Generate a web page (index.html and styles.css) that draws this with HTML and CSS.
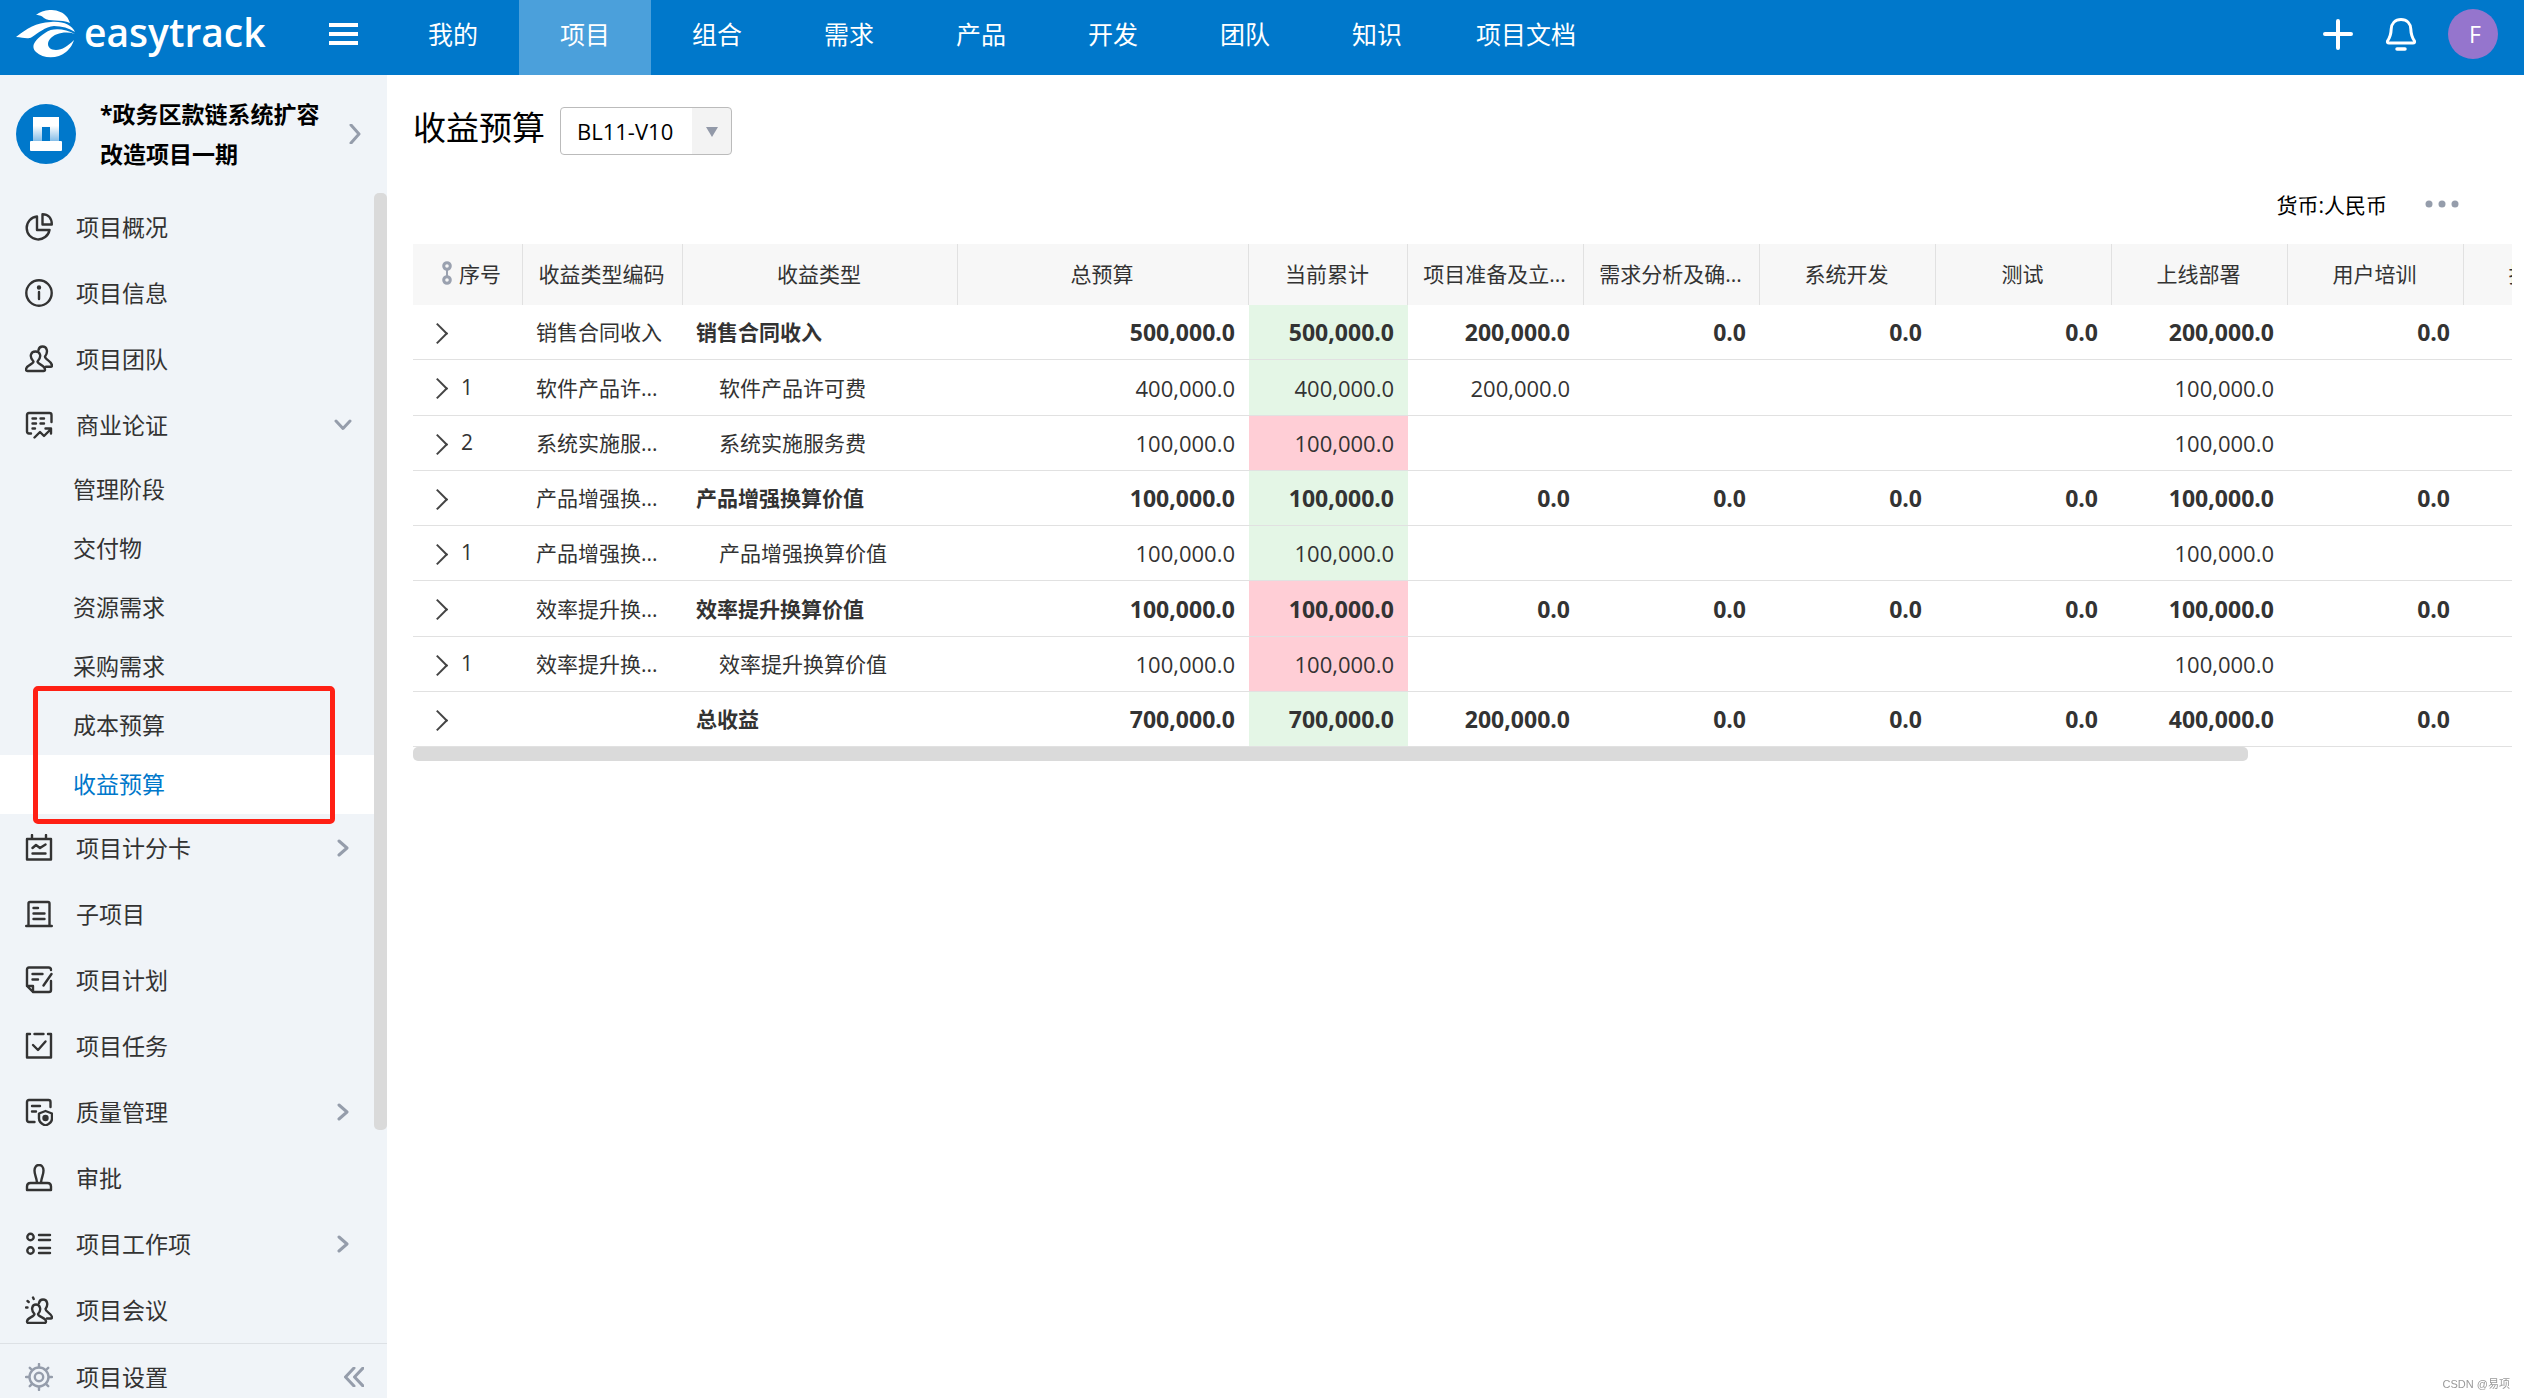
FILE: index.html
```html
<!DOCTYPE html>
<html lang="zh-CN">
<head>
<meta charset="utf-8">
<title>收益预算</title>
<link rel="stylesheet" href="styles.css">
</head>
<body>
<header class="topbar">
  <div class="brand">
    <a class="logo" href="#">
      <svg width="60" height="48" viewBox="0 0 60 48" fill="#fff" aria-hidden="true">
        <path d="M20 5 C28 -2 44 -2 51 7 C53 10 54 13 54 13 C45 9 33 12 28 8 C25 5 22 5 20 5 Z"/>
        <path d="M0 27 C12 18 19 13 35 12 C47 11 56 15 59 22 C53 18 46 16 38 16 C29 17 22 23 16 27 C11 30 7 27 0 27 Z"/>
        <path d="M59 24 C49 19 37 17 29 23 C19 30 14 36 20 42 C27 49 42 49 50 42 C55 38 57 33 58 30 C52 36 46 40 40 40 C32 40 30 34 34 29 C39 23 50 21 59 24 Z"/>
      </svg>
      <span class="logo-text">easytrack</span>
    </a>
    <button class="icon-btn" type="button" aria-label="菜单">
      <svg width="30" height="24" viewBox="0 0 30 24" stroke="#fff" stroke-width="4"><path d="M0 3H29M0 12H29M0 21H29"/></svg>
    </button>
  </div>
  <nav class="topnav">
    <a href="#">我的</a>
    <a href="#" class="current">项目</a>
    <a href="#">组合</a>
    <a href="#">需求</a>
    <a href="#">产品</a>
    <a href="#">开发</a>
    <a href="#">团队</a>
    <a href="#">知识</a>
    <a href="#">项目文档</a>
  </nav>
  <div class="tools">
    <button class="icon-btn" type="button" aria-label="新建">
      <svg width="32" height="34" viewBox="0 0 32 34" stroke="#fff" stroke-width="4" stroke-linecap="round"><path d="M16 4V31M3 17H29"/></svg>
    </button>
    <button class="icon-btn" type="button" aria-label="通知">
      <svg width="32" height="34" viewBox="0 0 32 34" fill="none" stroke="#fff" stroke-width="3" stroke-linecap="round" stroke-linejoin="round"><path d="M16 2.500C10 2.500 6.500 6.500 6.200 12C6 18 5 20.500 2.500 24Q2 26 4 26H28Q30 26 29.500 24C27 20.500 26 18 25.800 12C25.500 6.500 22 2.500 16 2.500Z"/><path d="M12 32H20" stroke-width="3.500"/></svg>
    </button>
    <button class="user" type="button">F</button>
  </div>
</header>

<div class="shell">
  <aside class="sidebar">
    <a class="project" href="#">
      <svg width="60" height="60" viewBox="0 0 60 60" aria-hidden="true">
        <defs><linearGradient id="tower" x1="0" y1="0" x2="0" y2="1"><stop offset="0.350" stop-color="#fff"/><stop offset="1" stop-color="#7db9e6"/></linearGradient></defs>
        <circle cx="30" cy="30" r="30" fill="#0078cb"/>
        <path d="M17 13H43V38H34V23H26V38H17Z" fill="url(#tower)"/>
        <rect x="14" y="37" width="32" height="10" rx="1" fill="#fff"/>
      </svg>
      <span class="project-name">*政务区款链系统扩容<br>改造项目一期</span>
      <svg class="chev" width="12" height="20" viewBox="0 0 12 20"><path d="M2 1L10 10L2 19"/></svg>
    </a>

    <div class="menu-area">
      <nav class="menu">
        <a class="item" href="#"><svg class="ico" viewBox="0 0 28 28"><path d="M12 3.500A11.500 11.500 0 1 0 24.500 17H12Z"/><path d="M17.500 1.200V11.500H26.800C26.800 5 23 1.200 17.500 1.200Z"/></svg><span>项目概况</span></a>
        <a class="item" href="#"><svg class="ico" viewBox="0 0 28 28"><circle cx="14" cy="14" r="12.700"/><path d="M14 13V20"/><circle cx="14" cy="8.500" r="1" fill="currentColor"/></svg><span>项目信息</span></a>
        <a class="item" href="#"><svg class="ico" viewBox="0 0 28 28"><path d="M8.500 16.500C4 12 5.500 6.500 10.500 6.500S17 12 12.500 16.500C12.500 19.500 20 20 20 24.500Q20 26 18.500 26H2.500Q1 26 1 24.500C1 20 8.500 19.500 8.500 16.500Z"/><path d="M13.500 5C14 2.500 16 1.500 17.500 1.500C22 1.500 23.500 7 20 11.500C20 15 27 16 27 20.500Q27 21.800 25.500 21.800H21"/></svg><span>项目团队</span></a>
        <a class="item" href="#"><svg class="ico" viewBox="0 0 28 28"><path d="M6 22.500H4Q2 22.500 2 20.500V4Q2 2 4 2H24.500Q26.500 2 26.500 4V11"/><path d="M7.500 7.500H11M15.500 7.500H19M7.500 12.500H11M15.500 12.500H19M7.500 17.500H10M9.500 26.500L15 21L19 25L26 18M20.500 17.500H26V22.500"/></svg><span>商业论证</span><svg class="chev down" width="18" height="12" viewBox="0 0 18 12"><path d="M2 2L9 9.500L16 2"/></svg></a>
        <div class="submenu">
          <a href="#">管理阶段</a>
          <a href="#">交付物</a>
          <a href="#">资源需求</a>
          <a href="#">采购需求</a>
          <a href="#">成本预算</a>
          <a href="#" class="current">收益预算</a>
          <div class="callout"></div>
        </div>
        <a class="item" href="#"><svg class="ico" viewBox="0 0 28 28"><path d="M2 5H26V25.500H2ZM7 1V5M21 1V5M7.500 19.500H20.500M7.500 14L11 11L15 14L20.500 10.500"/></svg><span>项目计分卡</span><svg class="chev" width="12" height="18" viewBox="0 0 12 18"><path d="M2 2L10 9L2 16"/></svg></a>
        <a class="item" href="#"><svg class="ico" viewBox="0 0 28 28"><path d="M3.500 26V3.500Q3.500 2 5 2H23Q24.500 2 24.500 3.500V26M1.200 26H26.800M8.500 8H13M8.500 13.500H19.500M8.500 19H19.500"/></svg><span>子项目</span></a>
        <a class="item" href="#"><svg class="ico" viewBox="0 0 28 28"><path d="M26 4Q26 1.500 23.500 1.500H4Q2 1.500 2 3.500V20L8 26H24Q26 26 26 24V15M2 20H8V26M7.500 8H17.500M7.500 13.500H13M18.500 19.500L26.500 8"/></svg><span>项目计划</span></a>
        <a class="item" href="#"><svg class="ico" viewBox="0 0 28 28"><path d="M5 2H2V25.500H26V2H23M9.500 2H18.500M8 13L13 18L20.500 9.500"/></svg><span>项目任务</span></a>
        <a class="item" href="#"><svg class="ico" viewBox="0 0 28 28"><path d="M9.500 24H4Q2 24 2 22V4Q2 2 4 2H23.500Q25.500 2 25.500 4V9M7 8H15M7 13.500H11"/><path d="M20.500 13L27 15.500V20.500Q27 25 20.500 27.500Q14 25 14 20.500V15.500Z"/><circle cx="20.500" cy="20" r="2" fill="currentColor"/></svg><span>质量管理</span><svg class="chev" width="12" height="18" viewBox="0 0 12 18"><path d="M2 2L10 9L2 16"/></svg></a>
        <a class="item" href="#"><svg class="ico" viewBox="0 0 28 28"><path d="M12 18.500C11.500 13 9.500 11 9.500 6.500C9.500 3 11.500 1 14 1S18.500 3 18.500 6.500C18.500 11 16.500 13 16 18.500M2 26V22.500Q2 19 5.500 19H22.500Q26 19 26 22.500V26Z"/></svg><span>审批</span></a>
        <a class="item" href="#"><svg class="ico" viewBox="0 0 28 28"><circle cx="5.500" cy="7" r="3.200"/><circle cx="5.500" cy="20.500" r="3.200"/><path d="M14 5H25M14 10H25M14 18H25M14 23H25"/></svg><span>项目工作项</span><svg class="chev" width="12" height="18" viewBox="0 0 12 18"><path d="M2 2L10 9L2 16"/></svg></a>
        <a class="item" href="#"><svg class="ico" viewBox="0 0 28 28"><path d="M9.500 18C5.500 14 7 8.500 11 8.500S17 14 13 18C13 21 21 21.500 21 25.500Q21 27 19.500 27H3.500Q2 27 2 25.500C2 21.500 9.500 21 9.500 18Z"/><path d="M14 7C14.500 4.500 16.500 3.500 18 3.500C22.500 3.500 23.500 9 20.500 13C20.500 16 27 17.500 27 21.500Q27 22.500 25.500 22.500H22"/><path d="M8 1.500L8.700 3M2.500 5L3.700 6M1 11.500H2.500"/></svg><span>项目会议</span></a>
      </nav>
      <div class="track"><div class="thumb"></div></div>
    </div>

    <div class="settings">
      <a class="settings-link" href="#"><svg class="ico muted" viewBox="0 0 28 28"><circle cx="14" cy="14" r="9.500"/><circle cx="14" cy="14" r="4.200"/><path d="M14 1V4M14 24V27M1 14H4M24 14H27M4.800 4.800L7 7M21 21L23.200 23.200M23.200 4.800L21 7M7 21L4.800 23.200"/></svg><span>项目设置</span></a>
      <button class="icon-btn" type="button" aria-label="收起">
        <svg class="chev" width="20" height="20" viewBox="0 0 20 20"><path d="M10 1L1.500 10L10 19M19 1L10.500 10L19 19"/></svg>
      </button>
    </div>
  </aside>

  <main class="content">
    <div class="title-row">
      <h1><label for="version">收益预算</label></h1>
      <div class="picker">
        <select id="version"><option>BL11-V10</option></select>
        <svg class="caret" width="12" height="10" viewBox="0 0 12 10"><path d="M0 0H12L6 10Z" fill="#9299a8"/></svg>
      </div>
    </div>
    <div class="toolbar">
      <span>货币:人民币</span>
      <button class="icon-btn" type="button" aria-label="更多">
        <svg width="34" height="8" viewBox="0 0 34 8" fill="#959dab"><circle cx="4" cy="4" r="3.500"/><circle cx="17" cy="4" r="3.500"/><circle cx="30" cy="4" r="3.500"/></svg>
      </button>
    </div>
    <div class="table-scroll">
      <table class="grid">
        <colgroup><col class="c-no"><col class="c-code"><col class="c-type"><col class="c-total"><col class="c-now"><col class="c-st"><col class="c-st"><col class="c-st"><col class="c-st"><col class="c-st"><col class="c-st"><col class="c-st"></colgroup>
        <thead>
          <tr>
            <th><div class="no-head"><svg width="12" height="24" viewBox="0 0 12 24" fill="none" stroke="#9aa1af" stroke-width="3"><circle cx="6" cy="5" r="3.300"/><circle cx="6" cy="19" r="3.300"/><path d="M6 8V16" stroke-width="2"/></svg><span>序号</span></div></th>
            <th>收益类型编码</th><th>收益类型</th><th>总预算</th><th>当前累计</th><th>项目准备及立...</th><th>需求分析及确...</th><th>系统开发</th><th>测试</th><th>上线部署</th><th>用户培训</th><th>投产验收</th>
          </tr>
        </thead>
        <tbody>
          <tr class="group"><td><button class="exp" type="button" aria-label="展开"></button></td><td>销售合同收入</td><td>销售合同收入</td><td>500,000.0</td><td class="ok">500,000.0</td><td>200,000.0</td><td>0.0</td><td>0.0</td><td>0.0</td><td>200,000.0</td><td>0.0</td><td></td></tr>
          <tr><td><button class="exp" type="button" aria-label="展开"></button>1</td><td>软件产品许...</td><td>软件产品许可费</td><td>400,000.0</td><td class="ok">400,000.0</td><td>200,000.0</td><td></td><td></td><td></td><td>100,000.0</td><td></td><td></td></tr>
          <tr><td><button class="exp" type="button" aria-label="展开"></button>2</td><td>系统实施服...</td><td>系统实施服务费</td><td>100,000.0</td><td class="bad">100,000.0</td><td></td><td></td><td></td><td></td><td>100,000.0</td><td></td><td></td></tr>
          <tr class="group"><td><button class="exp" type="button" aria-label="展开"></button></td><td>产品增强换...</td><td>产品增强换算价值</td><td>100,000.0</td><td class="ok">100,000.0</td><td>0.0</td><td>0.0</td><td>0.0</td><td>0.0</td><td>100,000.0</td><td>0.0</td><td></td></tr>
          <tr><td><button class="exp" type="button" aria-label="展开"></button>1</td><td>产品增强换...</td><td>产品增强换算价值</td><td>100,000.0</td><td class="ok">100,000.0</td><td></td><td></td><td></td><td></td><td>100,000.0</td><td></td><td></td></tr>
          <tr class="group"><td><button class="exp" type="button" aria-label="展开"></button></td><td>效率提升换...</td><td>效率提升换算价值</td><td>100,000.0</td><td class="bad">100,000.0</td><td>0.0</td><td>0.0</td><td>0.0</td><td>0.0</td><td>100,000.0</td><td>0.0</td><td></td></tr>
          <tr><td><button class="exp" type="button" aria-label="展开"></button>1</td><td>效率提升换...</td><td>效率提升换算价值</td><td>100,000.0</td><td class="bad">100,000.0</td><td></td><td></td><td></td><td></td><td>100,000.0</td><td></td><td></td></tr>
          <tr class="group"><td><button class="exp" type="button" aria-label="展开"></button></td><td></td><td>总收益</td><td>700,000.0</td><td class="ok">700,000.0</td><td>200,000.0</td><td>0.0</td><td>0.0</td><td>0.0</td><td>400,000.0</td><td>0.0</td><td></td></tr>
        </tbody>
      </table>
    </div>
    <div class="h-thumb"></div>
  </main>
</div>
<div class="watermark">CSDN @易项</div>
</body>
</html>
```
FILE: styles.css
```css
* { box-sizing: border-box; }

body {
  margin: 0;
  height: 100vh;
  display: flex;
  flex-direction: column;
  overflow: hidden;
  background: #fff;
  color: #333;
  font-family: "Open Sans", "Noto Sans CJK SC", sans-serif;
  font-size: 21px;
  font-weight: 400;
}

a { color: inherit; text-decoration: none; }

button {
  padding: 0;
  border: 0;
  background: none;
  font: inherit;
  color: inherit;
}

.icon-btn { display: flex; }

/* top bar */
.topbar {
  display: flex;
  flex: none;
  height: 75px;
  background: #0078cb;
  color: #fff;
}

.brand {
  width: 387px;
  flex: none;
  display: flex;
  align-items: center;
  justify-content: space-between;
  padding: 0 28px 7px 16px;
}

.logo { display: flex; align-items: center; gap: 8px; }
.logo-text { padding-bottom: 4px; font-size: 39px; font-weight: 600; line-height: 48px; }

.topnav { display: flex; flex: 1; }
.topnav a {
  min-width: 132px;
  padding: 0 33px 10px;
  display: flex;
  align-items: center;
  justify-content: center;
  font-size: 25px;
}
.topnav .current { background: #4ba0db; }

.tools {
  display: flex;
  align-items: center;
  gap: 31px;
  padding: 0 26px 8px 0;
}
.user {
  width: 50px;
  height: 50px;
  padding-left: 4px;
  border-radius: 50%;
  background: #9575cd;
  font-size: 23px;
}

.shell { display: flex; flex: 1; min-height: 0; }

/* sidebar */
.sidebar {
  width: 387px;
  flex: none;
  display: flex;
  flex-direction: column;
  background: #f0f4f8;
  font-size: 23px;
}

.project {
  flex: none;
  height: 118px;
  display: flex;
  align-items: center;
  padding: 0 26px 1px 16px;
}
.project-name {
  flex: 1;
  margin-left: 24px;
  color: #000;
  font-weight: 700;
  line-height: 40px;
}

.chev {
  fill: none;
  stroke: #959dab;
  stroke-width: 3;
  stroke-linecap: round;
  stroke-linejoin: round;
}

.menu-area { flex: 1; min-height: 0; display: flex; }
.menu { flex: 1; overflow: hidden; padding-top: 1px; }
.item {
  height: 66px;
  display: flex;
  align-items: center;
  padding: 0 25px;
}
.item span { flex: 1; padding-bottom: 3px; }
.ico {
  width: 28px;
  height: 28px;
  margin-right: 23px;
  fill: none;
  stroke: currentColor;
  stroke-width: 2.4px;
  stroke-linecap: round;
  stroke-linejoin: round;
}
.muted { color: #959dab; }
.down { margin-right: -3px; }

.submenu { position: relative; padding: 2px 0 1px; }
.submenu a {
  display: block;
  height: 59px;
  padding-left: 73px;
  line-height: 58px;
}
.submenu .current { background: #fff; color: #0078cb; }

/* red marker drawn over the two budget entries */
.callout {
  position: absolute;
  left: 33px;
  right: 39px;
  bottom: -9px;
  height: 138px;
  border: 5px solid #ff2014;
  border-radius: 5px;
  pointer-events: none;
}

.track { width: 13px; }
.thumb { height: 81.5%; border-radius: 5px; background: #dadada; }

.settings {
  flex: none;
  height: 55px;
  padding: 12px 23px 0 25px;
  display: flex;
  align-items: center;
  justify-content: space-between;
  border-top: 1px solid #dde1e5;
}
.settings-link { display: flex; align-items: center; }
.settings-link span { padding-bottom: 2px; }

/* content */
.content { flex: 1; min-width: 0; padding: 32px 12px 0 26px; }

.title-row { display: flex; gap: 15px; height: 48px; }
h1 { margin: 0; color: #000; font-size: 33px; font-weight: 400; line-height: 42px; }

.picker { position: relative; }
select {
  appearance: none;
  width: 172px;
  height: 48px;
  padding: 0 0 0 16px;
  border: 1px solid #bbb;
  border-radius: 4px;
  background: linear-gradient(90deg, #fff 131px, #f3f3f3 131px);
  color: #000;
  font: inherit;
  font-size: 22px;
}
.caret { position: absolute; right: 14px; top: 20px; pointer-events: none; }

.toolbar {
  height: 89px;
  padding: 9px 53px 0 0;
  display: flex;
  align-items: center;
  justify-content: flex-end;
  gap: 38px;
  color: #000;
}

.table-scroll { overflow: hidden; }
.grid { width: 2227px; table-layout: fixed; border-collapse: separate; border-spacing: 0; }
.c-no { width: 110px; }
.c-code { width: 160px; }
.c-type { width: 275px; }
.c-total { width: 291px; }
.c-now { width: 159px; }
.c-st { width: 176px; }

th {
  height: 61px;
  padding: 0 2px 3px 0;
  background: #f7f7f7;
  border-right: 1px solid #e1e1e1;
  font-weight: 400;
  white-space: nowrap;
}
.no-head { display: flex; align-items: center; gap: 6px; padding-left: 28px; }

td {
  height: 55px;
  padding: 0 14px 0 13px;
  border-bottom: 1px solid #e1e1e1;
  text-align: right;
  white-space: nowrap;
}
tr:nth-child(4n+2) td { height: 56px; }
td:nth-child(-n+3) { padding-bottom: 2px; text-align: left; }
td:nth-child(3) { padding-left: 36px; }
td:first-child { padding-left: 17px; }
td:nth-child(n+4) { font-size: 22px; }
.group td { font-weight: 700; }
.group td:nth-child(n+4) { font-size: 23px; }
.group td:nth-child(2) { font-weight: 400; }
.group td:nth-child(3) { padding-left: 13px; }
.ok { background: #e4f6e6; }
.bad { background: #ffced6; }

.exp { width: 31px; height: 20px; vertical-align: middle; }
.exp::before {
  content: "";
  display: block;
  width: 13px;
  height: 13px;
  border: solid #444;
  border-width: 2px 2px 0 0;
  transform: rotate(45deg);
}

.h-thumb { width: 87.4%; height: 14px; border-radius: 5px; background: #dadada; }

.watermark {
  position: fixed;
  right: 14px;
  bottom: 6px;
  color: #999;
  font-family: "Liberation Sans", "Noto Sans CJK SC", sans-serif;
  font-size: 11px;
  line-height: 16px;
}
```
